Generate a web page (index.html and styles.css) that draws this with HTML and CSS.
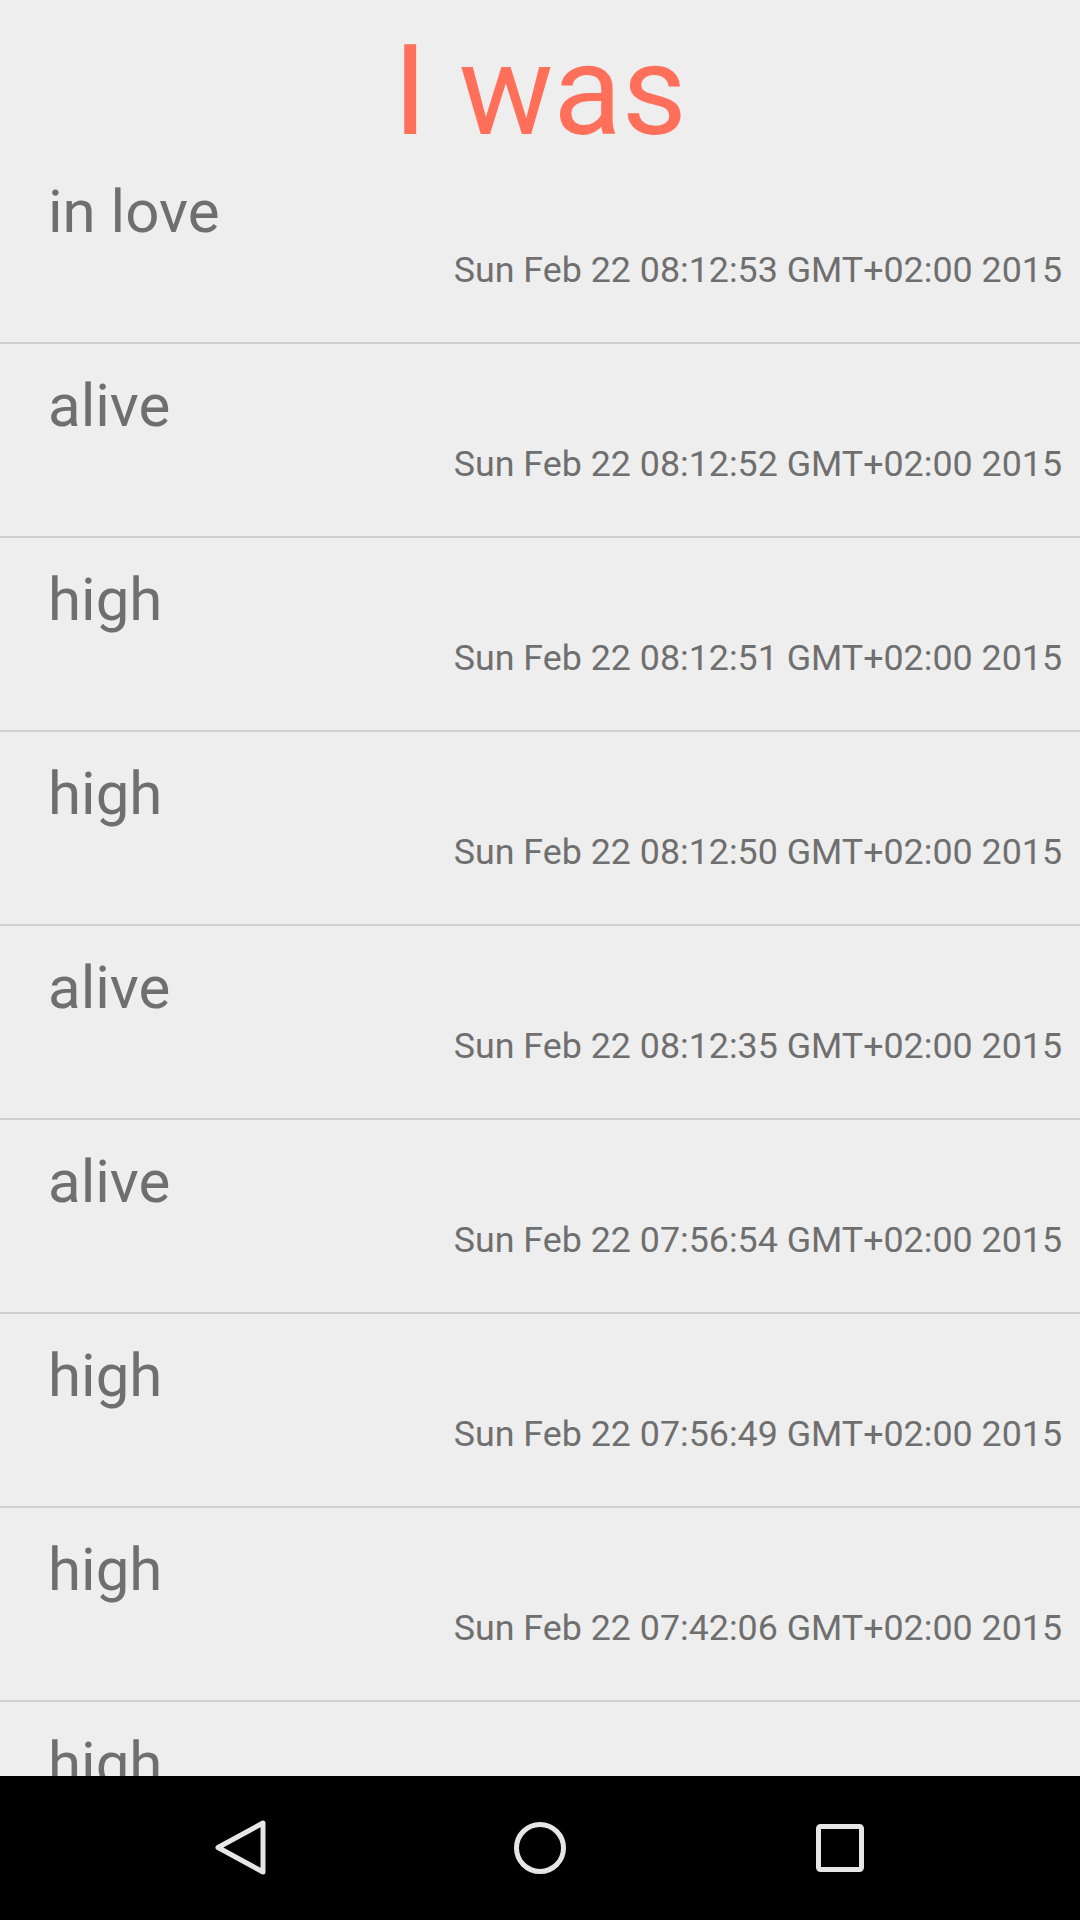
FILE: index.html
```html
<!DOCTYPE html>
<html lang="en">
<head>
    <meta charset="UTF-8">
    <meta name="viewport" content="width=device-width, initial-scale=1.0">
    <title>I was</title>
    <link rel="stylesheet" href="styles.css">
</head>
<body>
    <div class="screen">
        <h1 class="title">I was</h1>
        <ul class="list">
            <li class="row">
                <div class="state">in love</div>
                <div class="date">Sun Feb 22 08:12:53 GMT+02:00 2015</div>
            </li>
            <li class="row">
                <div class="state">alive</div>
                <div class="date">Sun Feb 22 08:12:52 GMT+02:00 2015</div>
            </li>
            <li class="row">
                <div class="state">high</div>
                <div class="date">Sun Feb 22 08:12:51 GMT+02:00 2015</div>
            </li>
            <li class="row">
                <div class="state">high</div>
                <div class="date">Sun Feb 22 08:12:50 GMT+02:00 2015</div>
            </li>
            <li class="row">
                <div class="state">alive</div>
                <div class="date">Sun Feb 22 08:12:35 GMT+02:00 2015</div>
            </li>
            <li class="row">
                <div class="state">alive</div>
                <div class="date">Sun Feb 22 07:56:54 GMT+02:00 2015</div>
            </li>
            <li class="row">
                <div class="state">high</div>
                <div class="date">Sun Feb 22 07:56:49 GMT+02:00 2015</div>
            </li>
            <li class="row">
                <div class="state">high</div>
                <div class="date">Sun Feb 22 07:42:06 GMT+02:00 2015</div>
            </li>
            <li class="row">
                <div class="state">high</div>
            </li>
        </ul>
        <div class="navbar">
            <div class="nav-btn">
                <svg width="120" height="144" viewBox="0 0 120 144">
                    <polygon points="83,47 83,96 38,71.5" fill="none" stroke="#e6e6e6" stroke-width="5" stroke-linejoin="round"/>
                </svg>
            </div>
            <div class="nav-btn">
                <svg width="120" height="144" viewBox="0 0 120 144">
                    <circle cx="60" cy="72" r="23.5" fill="none" stroke="#e6e6e6" stroke-width="5"/>
                </svg>
            </div>
            <div class="nav-btn">
                <svg width="120" height="144" viewBox="0 0 120 144">
                    <rect x="38.5" y="50.5" width="43" height="43" rx="2" fill="none" stroke="#e6e6e6" stroke-width="5"/>
                </svg>
            </div>
        </div>
    </div>
</body>
</html>
```

FILE: styles.css
```css
body {
    margin: 0;
    font-family: Roboto, "Noto Sans", sans-serif;
    background-color: #eeeeee;
}

.screen {
    width: 1080px;
    height: 1920px;
    display: flex;
    flex-direction: column;
    overflow: hidden;
}

.title {
    margin: 0;
    height: 150px;
    box-sizing: border-box;
    padding-top: 33px;
    font-size: 126px;
    font-weight: 400;
    line-height: 117px;
    text-align: center;
    color: #ff6f59;
}

.list {
    flex: 1;
    margin: 0;
    padding: 0;
    list-style: none;
    overflow: hidden;
}

.row {
    height: 194px;
    box-sizing: border-box;
    padding: 32px 18px 0 48px;
    border-bottom: 2px solid #d0d0d0;
    color: #6f6f6f;
}

.state {
    font-size: 60px;
    line-height: 60px;
}

.date {
    margin-top: 10px;
    font-size: 35.8px;
    line-height: 36px;
    text-align: right;
}

.navbar {
    height: 144px;
    flex-shrink: 0;
    background-color: #000000;
    display: flex;
    justify-content: space-between;
    padding: 0 180px;
}

.nav-btn {
    width: 120px;
    height: 144px;
}

.nav-btn svg {
    display: block;
}
```
